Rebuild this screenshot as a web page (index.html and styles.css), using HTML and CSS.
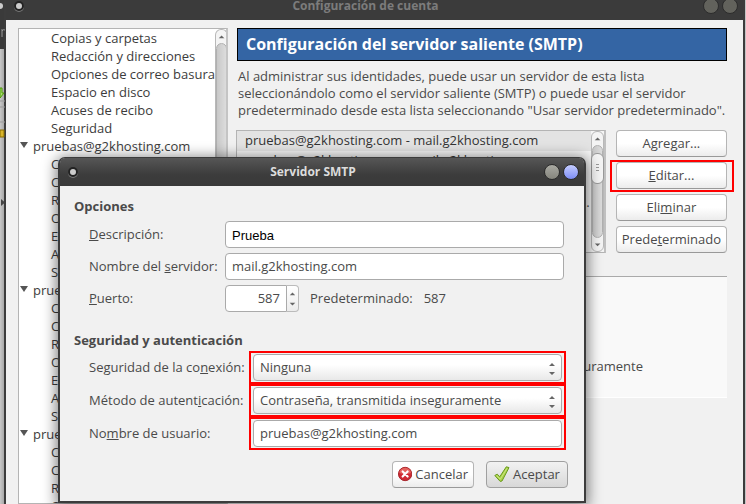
FILE: index.html
```
<!DOCTYPE html>
<html lang="es">

<head>
    <meta charset="UTF-8">
    <meta name="viewport" content="width=device-width, initial-scale=1.0">
    <title>Configuración de cuenta</title>
    <link rel="stylesheet" href="styles.css">
</head>

<body>

    <div class="back-window">
        <span class="back-header"></span>
        <svg class="back-icons" viewBox="0 0 5 504" width="5" height="504" preserveAspectRatio="xMinYMin">
            <circle cx="0" cy="6" r="3" fill="#ccc" />
            <path d="M2 29v8M2 31q1-2 3-1" stroke="#999" fill="none" />
            <path d="M0 88h2v5h2l-4 5z" fill="#a4dc6a" stroke="#4e9a06" />
            <path d="M0 101h5M0 107h5M0 122h5" stroke="#999" />
            <path d="M0 130h4v7H0z" fill="#d9b52a" stroke="#8a6d00" />
            <path d="M1 199l4 3.500-4 3.500z" fill="#444" />
        </svg>
    </div>

    <div class="window">
        <header class="titlebar titlebar-inactive">
            <span class="menu-dot"></span>
            <h1>Configuración de cuenta</h1>
            <button type="button" class="win-btn" aria-label="Maximizar"></button>
            <button type="button" class="win-btn" aria-label="Cerrar"></button>
        </header>

        <div class="window-body">
            <nav class="accounts">
                <ul class="tree">
                    <li>Copias y carpetas</li>
                    <li>Redacción y direcciones</li>
                    <li>Opciones de correo basura</li>
                    <li>Espacio en disco</li>
                    <li>Acuses de recibo</li>
                    <li>Seguridad</li>
                    <li class="account">pruebas@g2khosting.com</li>
                    <li>Configuración</li>
                    <li>Copias y carpetas</li>
                    <li>Redacción y direcciones</li>
                    <li>Opciones de correo</li>
                    <li>Espacio en disco</li>
                    <li>Acuses de recibo</li>
                    <li>Seguridad</li>
                    <li class="account">pruebas</li>
                    <li>Configuración</li>
                    <li>Copias y carpetas</li>
                    <li>Redacción y direcciones</li>
                    <li>Opciones de correo</li>
                    <li>Espacio en disco</li>
                    <li>Acuses de recibo</li>
                    <li>Seguridad</li>
                    <li class="account">pruebas</li>
                    <li>Configuración</li>
                    <li>Copias y carpetas</li>
                    <li>Redacción y direcciones</li>
                    <li>Opciones de correo</li>
                </ul>
                <div class="scrollbar">
                    <svg class="scroll-arrow" viewBox="0 0 12 14"><path d="M3 9h6L6 6z" /></svg>
                    <span class="scroll-fill"></span>
                </div>
            </nav>

            <main class="panel">
                <h2 class="banner">Configuración del servidor saliente (SMTP)</h2>
                <p class="intro">Al administrar sus identidades, puede usar un servidor de esta lista seleccionándolo como el servidor saliente (SMTP) o puede usar el servidor predeterminado desde esta lista seleccionando "Usar servidor predeterminado".</p>

                <div class="servers">
                    <div class="server-list">
                        <ul>
                            <li class="selected">pruebas@g2khosting.com - mail.g2khosting.com</li>
                            <li>pruebas@g2khosting.com - mail.g2khosting.com</li>
                        </ul>
                        <span class="cut">...</span>
                        <div class="scrollbar">
                            <svg class="scroll-arrow" viewBox="0 0 12 14"><path d="M3 9h6L6 6z" /></svg>
                            <div class="scroll-track">
                                <span class="scroll-thumb"></span>
                            </div>
                            <svg class="scroll-arrow" viewBox="0 0 12 14"><path d="M3 6h6L6 9z" /></svg>
                        </div>
                    </div>
                    <div class="server-buttons">
                        <button type="button" class="btn">Agregar...</button>
                        <div class="mark-button">
                            <button type="button" class="btn"><u>E</u>ditar...</button>
                        </div>
                        <button type="button" class="btn">Eli<u>m</u>inar</button>
                        <button type="button" class="btn">Prede<u>t</u>erminado</button>
                    </div>
                </div>

                <div class="details">
                    <span>Contraseña, transmitida inseguramente</span>
                </div>
            </main>
        </div>
    </div>

    <div class="dialog" role="dialog" aria-labelledby="dialog-title">
        <header class="titlebar">
            <span class="menu-dot"></span>
            <h2 id="dialog-title">Servidor SMTP</h2>
            <button type="button" class="win-btn" aria-label="Maximizar"></button>
            <button type="button" class="win-btn win-close" aria-label="Cerrar"></button>
        </header>

        <form class="dialog-body">
            <h3>Opciones</h3>
            <div class="fields options">
                <label for="description"><u>D</u>escripción:</label>
                <input id="description" class="field plain" type="text" value="Prueba">

                <label for="server">Nombre del <u>s</u>ervidor:</label>
                <input id="server" class="field" type="text" value="mail.g2khosting.com">

                <label for="port"><u>P</u>uerto:</label>
                <div class="port">
                    <input id="port" class="field" type="text" value="587">
                    <svg class="spinner" viewBox="0 0 12 27" width="12" height="27"><path d="M3 10h6L6 7zM3 18h6l-3 3z" /></svg>
                    <span>Predeterminado:</span>
                    <span>587</span>
                </div>
            </div>

            <h3>Seguridad y autenticación</h3>
            <div class="fields security">
                <label for="connection">Seguridad de la co<u>n</u>exión:</label>
                <div class="mark">
                    <select id="connection" class="combo">
                        <option>Ninguna</option>
                    </select>
                    <svg class="arrows" viewBox="0 0 6 12" width="6" height="12"><path d="M0 3h6L3 0zM0 9h6l-3 3z" /></svg>
                </div>

                <label for="method">Método de autent<u>i</u>cación:</label>
                <div class="mark">
                    <select id="method" class="combo">
                        <option>Contraseña, transmitida inseguramente</option>
                    </select>
                    <svg class="arrows" viewBox="0 0 6 12" width="6" height="12"><path d="M0 3h6L3 0zM0 9h6l-3 3z" /></svg>
                </div>

                <label for="user">No<u>m</u>bre de usuario:</label>
                <div class="mark">
                    <input id="user" class="field" type="text" value="pruebas@g2khosting.com">
                </div>
            </div>

            <div class="actions">
                <button type="button" class="btn">
                    <svg viewBox="0 0 16 16" width="16" height="16">
                        <circle cx="8" cy="8" r="7.500" fill="#cf2a33" stroke="#a01c22" />
                        <path d="M1.500 7a6.500 6 0 0 1 13 0q-6 2-13 0z" fill="#e4635f" />
                        <path d="M5.200 5.200l5.600 5.600M10.800 5.200l-5.600 5.600" stroke="#fff" stroke-width="2.400" stroke-linecap="round" />
                    </svg>
                    Cancelar
                </button>
                <button type="submit" class="btn btn-default">
                    <svg viewBox="0 0 16 16" width="16" height="16">
                        <path d="M.8 9.500l2.400-1.300 2.600 2.500L12.300.8l2.700.8L8 15l-1.800.4z" fill="#a9d24a" stroke="#6a9a1f" stroke-linejoin="round" />
                        <path d="M2.500 9.700l3.800 3.500L13 2.300" fill="none" stroke="#cbe67f" />
                    </svg>
                    Aceptar
                </button>
            </div>
        </form>
    </div>

</body>

</html>
```

FILE: styles.css
```
* {
    box-sizing: border-box;
}

body {
    margin: 0;
    height: 100vh;
    display: flex;
    overflow: hidden;
    position: relative;
    background-color: #c4c4c4;
    color: #4a4a4a;
    font-family: "Open Sans", "Noto Sans", sans-serif;
    font-size: 13px;
    line-height: 18px;
}

h1,
h2,
h3,
p,
ul {
    margin: 0;
    padding: 0;
}

ul {
    list-style: none;
}

button,
input,
select {
    font: inherit;
    color: inherit;
}

/* window behind */
.back-window {
    flex: 0 0 4px;
    position: relative;
    background: linear-gradient(to right, #c8c8c8, #a8a8a8);
}

.back-header {
    display: block;
    height: 49px;
    background-color: #3a3a3a;
}

.back-icons {
    position: absolute;
    top: 0;
    left: 0;
}

/* account settings window */
.window {
    flex: 1;
    min-width: 0;
    margin-right: 1px;
    display: flex;
    flex-direction: column;
    border: solid #3c3c3c;
    border-width: 0 2px;
    background-color: #f1f1f1;
}

.titlebar {
    display: flex;
    align-items: center;
    gap: 3px;
    height: 28px;
    padding: 0 5px 0 8px;
    background: linear-gradient(#565656, #3c3c3c 60%, #393939);
    color: #dcdcdc;
}

.titlebar h1,
.titlebar h2 {
    flex: 1;
    padding-left: 4px;
    font-size: 12px;
    line-height: 18px;
    text-align: center;
}

.titlebar-inactive {
    height: 20px;
    padding-bottom: 8px;
    background: #3b3b3b;
    color: #7c7c7c;
}

.menu-dot {
    width: 10px;
    height: 10px;
    border: 2px solid #222;
    border-radius: 50%;
    background-color: #ccc;
    box-shadow: 0 1px 0 #777;
}

.win-btn {
    width: 16px;
    height: 16px;
    padding: 0;
    border: 1px solid #2c2c2c;
    border-radius: 50%;
    background: linear-gradient(#a9a9a2, #85857d);
}

.titlebar-inactive .win-btn {
    background: #62625c;
}

.titlebar .win-close {
    background: linear-gradient(#c5cdff, #7d8df5);
}

.window-body {
    flex: 1;
    min-height: 0;
    display: flex;
    gap: 8px;
    padding: 8px 16px 0 12px;
}

.accounts {
    flex: 0 0 210px;
    display: flex;
    overflow: hidden;
    border: 1px solid #b4b4b4;
    border-right: 2px solid #c4c4c4;
    background-color: #fff;
}

.tree {
    flex: 1;
    white-space: nowrap;
    color: #3c3c3c;
}

.tree li {
    padding-left: 32px;
}

.tree .account {
    padding-left: 14px;
    position: relative;
}

.account::before {
    content: "";
    position: absolute;
    left: 1px;
    top: 5px;
    border: 4px solid transparent;
    border-top: 6px solid #555;
    border-bottom: 0;
}

.scrollbar {
    flex: 0 0 13px;
    display: flex;
    flex-direction: column;
    border: 1px solid #b8b8b8;
    border-radius: 6px;
    background-color: #f4f4f4;
}

.scroll-arrow {
    flex: 0 0 13px;
    height: 13px;
    fill: #666;
}

.scroll-fill,
.scroll-track {
    flex: 1;
    border: 1px solid #b0b0b0;
    border-radius: 6px 6px 0 0;
    background: linear-gradient(to right, #c8c8c8, #dcdcdc);
}

.accounts .scrollbar {
    border-bottom: 0;
    border-radius: 6px 6px 0 0;
}

.scroll-track {
    border-radius: 6px;
    padding-top: 7px;
}

.scroll-thumb {
    display: block;
    height: 31px;
    margin: 0 -2px;
    border: 1px solid #999;
    border-radius: 6px;
    background: repeating-linear-gradient(#999 0 1px, #f4f4f4 1px 3px) center / 3px 9px no-repeat #f4f4f4;
}

.panel {
    flex: 1;
    min-width: 0;
}

.banner {
    margin-left: 1px;
    padding: 6px 8px;
    border: 1px solid #000;
    background-color: #3465a4;
    color: #fff;
    font-size: 16px;
    line-height: 19px;
}

.intro {
    margin: 7px 0 11px 2px;
    line-height: 17px;
}

.servers {
    display: flex;
    gap: 10px;
}

.server-list {
    flex: 1;
    display: flex;
    position: relative;
    border: 1px solid #b4b4b4;
    border-right: 2px solid #c0c0c0;
    background-color: #f5f5f5;
}

.server-list ul {
    flex: 1;
    white-space: nowrap;
    color: #333;
}

.server-list li {
    padding: 0 8px;
    height: 20px;
}

.server-list .selected {
    background-color: #e3e3e3;
}

.cut {
    position: absolute;
    right: 14px;
    top: 62px;
}

.server-buttons {
    flex: 0 0 110px;
    display: flex;
    flex-direction: column;
    gap: 5px;
}

.btn {
    height: 27px;
    width: 100%;
    padding: 0 5px 2px;
    border: 1px solid #b5b5b5;
    border-bottom-color: #999;
    border-radius: 4px;
    background: linear-gradient(#fff 50%, #ececec);
    white-space: nowrap;
}

.btn-default {
    border-color: #a0a0a0;
    background: linear-gradient(#f2f2f2, #d8d8d8);
}

.mark-button {
    position: relative;
}

.mark-button .btn {
    display: block;
}

.mark-button::after {
    content: "";
    position: absolute;
    inset: -2px -7px -3px -6px;
    border: 2px solid #f00;
    pointer-events: none;
}

.details {
    margin-top: 23px;
    height: 122px;
    padding: 80px 84px 0;
    border-top: 1px solid #aaa;
    border-bottom: 1px solid #fff;
    background-color: #f9f9f9;
    text-align: right;
}

/* SMTP dialog */
.dialog {
    position: absolute;
    left: 58px;
    right: 160px;
    top: 157px;
    border: 2px solid #3c3c3c;
    border-top-width: 1px;
    border-radius: 7px 7px 0 0;
    background-color: #f1f1f1;
    box-shadow: 0 2px 14px 2px rgba(0, 0, 0, 0.5);
}

.dialog .titlebar {
    border-radius: 5px 5px 0 0;
}

.dialog-body {
    padding: 11px 16px 13px 14px;
}

.dialog-body h3 {
    font-size: 13px;
    line-height: 18px;
}

.fields {
    display: grid;
    align-items: center;
}

.fields label {
    padding-bottom: 2px;
}

.options {
    grid-template-columns: 136px 1fr;
    row-gap: 5px;
    margin: 6px 4px 19px 15px;
}

.security {
    grid-template-columns: 160px 1fr;
    margin: 2px 2px 11px 15px;
}

.field {
    width: 100%;
    height: 27px;
    padding: 0 6px 2px;
    border: 1px solid #aaa;
    border-radius: 4px;
    background-color: #fff;
}

.plain {
    padding: 1px 6px 0;
    color: #000;
    font-family: "Liberation Sans", sans-serif;
}

.port {
    display: flex;
    align-items: center;
}

.port .field {
    width: 62px;
    border-radius: 4px 0 0 4px;
    text-align: right;
}

.spinner {
    width: 12px;
    border: 1px solid #bbb;
    border-left: 0;
    border-radius: 0 4px 4px 0;
    background: linear-gradient(#fff, #ececec);
    fill: #666;
}

.port span {
    margin-left: 11px;
    padding-bottom: 2px;
}

.mark {
    position: relative;
    height: 33px;
    padding: 1px 2px;
    border: 2px solid #f00;
}

.combo {
    width: 100%;
    height: 27px;
    padding: 0 6px 1px;
    border: 1px solid #aaa;
    border-radius: 4px;
    background: linear-gradient(#fff 40%, #e8e8e8);
    appearance: none;
}

.arrows {
    position: absolute;
    right: 9px;
    top: 10px;
    fill: #666;
}

.actions {
    display: flex;
    justify-content: flex-end;
    gap: 12px;
}

.actions .btn {
    width: 82px;
    display: flex;
    align-items: center;
    justify-content: center;
    gap: 3px;
}
```
